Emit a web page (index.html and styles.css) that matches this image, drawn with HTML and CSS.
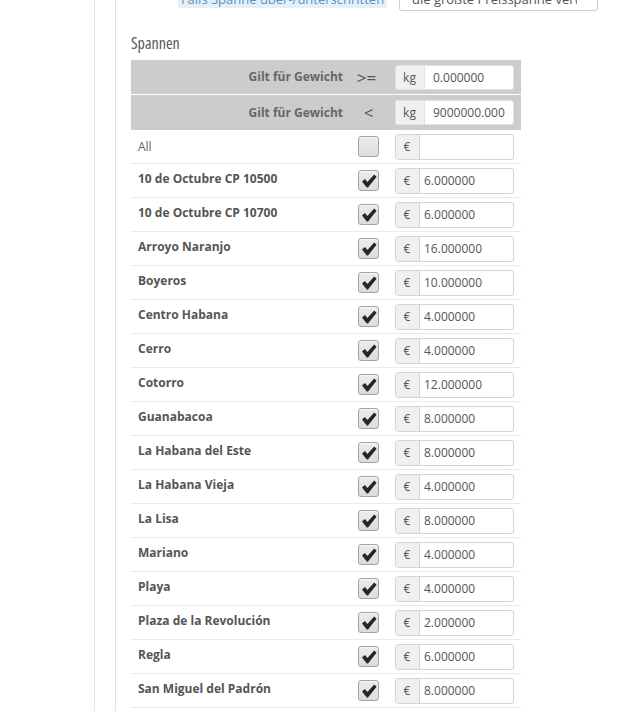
FILE: index.html
```html
<!DOCTYPE html>
<html lang="de">
<head>
<meta charset="utf-8">
<title>Spannen</title>
<link rel="stylesheet" href="styles.css">
</head>
<body>
<div class="frame">
  <div class="rail"></div>
  <div class="gutter"></div>
  <div class="content">
    <div class="toprow">
      <span class="hint">Falls Spanne über-/unterschritten</span>
      <div class="select"><span class="select-text">die größte Preisspanne verwenden</span><span class="caret"></span></div>
    </div>
    <h4 class="title">Spannen</h4>
    <div class="ranges">
      <div class="hrow first">
        <div class="lbl">Gilt für Gewicht</div>
        <div class="op">&gt;=</div>
        <div class="inp"><div class="group"><span class="addon kg">kg</span><span class="field kgf">0.000000</span></div></div>
      </div>
      <div class="hrow second">
        <div class="lbl">Gilt für Gewicht</div>
        <div class="op lt">&lt;</div>
        <div class="inp"><div class="group"><span class="addon kg">kg</span><span class="field kgf">9000000.000</span></div></div>
      </div>
      <div class="row">
        <div class="lbl all">All</div>
        <div class="chk"><span class="box"></span></div>
        <div class="inp"><div class="group"><span class="addon">€</span><span class="field"></span></div></div>
      </div>
      <div class="row"><div class="lbl">10 de Octubre CP 10500</div><div class="chk"><span class="box"><svg class="tick" viewBox="0 0 16 16"><path d="M1 8.6 L3.9 6 L6.4 9 L13.2 1.4 L15.6 3.8 L7 14.6 L5.8 14.6 Z"/></svg></span></div><div class="inp"><div class="group"><span class="addon">€</span><span class="field">6.000000</span></div></div></div>
      <div class="row"><div class="lbl">10 de Octubre CP 10700</div><div class="chk"><span class="box"><svg class="tick" viewBox="0 0 16 16"><path d="M1 8.6 L3.9 6 L6.4 9 L13.2 1.4 L15.6 3.8 L7 14.6 L5.8 14.6 Z"/></svg></span></div><div class="inp"><div class="group"><span class="addon">€</span><span class="field">6.000000</span></div></div></div>
      <div class="row"><div class="lbl">Arroyo Naranjo</div><div class="chk"><span class="box"><svg class="tick" viewBox="0 0 16 16"><path d="M1 8.6 L3.9 6 L6.4 9 L13.2 1.4 L15.6 3.8 L7 14.6 L5.8 14.6 Z"/></svg></span></div><div class="inp"><div class="group"><span class="addon">€</span><span class="field">16.000000</span></div></div></div>
      <div class="row"><div class="lbl">Boyeros</div><div class="chk"><span class="box"><svg class="tick" viewBox="0 0 16 16"><path d="M1 8.6 L3.9 6 L6.4 9 L13.2 1.4 L15.6 3.8 L7 14.6 L5.8 14.6 Z"/></svg></span></div><div class="inp"><div class="group"><span class="addon">€</span><span class="field">10.000000</span></div></div></div>
      <div class="row"><div class="lbl">Centro Habana</div><div class="chk"><span class="box"><svg class="tick" viewBox="0 0 16 16"><path d="M1 8.6 L3.9 6 L6.4 9 L13.2 1.4 L15.6 3.8 L7 14.6 L5.8 14.6 Z"/></svg></span></div><div class="inp"><div class="group"><span class="addon">€</span><span class="field">4.000000</span></div></div></div>
      <div class="row"><div class="lbl">Cerro</div><div class="chk"><span class="box"><svg class="tick" viewBox="0 0 16 16"><path d="M1 8.6 L3.9 6 L6.4 9 L13.2 1.4 L15.6 3.8 L7 14.6 L5.8 14.6 Z"/></svg></span></div><div class="inp"><div class="group"><span class="addon">€</span><span class="field">4.000000</span></div></div></div>
      <div class="row"><div class="lbl">Cotorro</div><div class="chk"><span class="box"><svg class="tick" viewBox="0 0 16 16"><path d="M1 8.6 L3.9 6 L6.4 9 L13.2 1.4 L15.6 3.8 L7 14.6 L5.8 14.6 Z"/></svg></span></div><div class="inp"><div class="group"><span class="addon">€</span><span class="field">12.000000</span></div></div></div>
      <div class="row"><div class="lbl">Guanabacoa</div><div class="chk"><span class="box"><svg class="tick" viewBox="0 0 16 16"><path d="M1 8.6 L3.9 6 L6.4 9 L13.2 1.4 L15.6 3.8 L7 14.6 L5.8 14.6 Z"/></svg></span></div><div class="inp"><div class="group"><span class="addon">€</span><span class="field">8.000000</span></div></div></div>
      <div class="row"><div class="lbl">La Habana del Este</div><div class="chk"><span class="box"><svg class="tick" viewBox="0 0 16 16"><path d="M1 8.6 L3.9 6 L6.4 9 L13.2 1.4 L15.6 3.8 L7 14.6 L5.8 14.6 Z"/></svg></span></div><div class="inp"><div class="group"><span class="addon">€</span><span class="field">8.000000</span></div></div></div>
      <div class="row"><div class="lbl">La Habana Vieja</div><div class="chk"><span class="box"><svg class="tick" viewBox="0 0 16 16"><path d="M1 8.6 L3.9 6 L6.4 9 L13.2 1.4 L15.6 3.8 L7 14.6 L5.8 14.6 Z"/></svg></span></div><div class="inp"><div class="group"><span class="addon">€</span><span class="field">4.000000</span></div></div></div>
      <div class="row"><div class="lbl">La Lisa</div><div class="chk"><span class="box"><svg class="tick" viewBox="0 0 16 16"><path d="M1 8.6 L3.9 6 L6.4 9 L13.2 1.4 L15.6 3.8 L7 14.6 L5.8 14.6 Z"/></svg></span></div><div class="inp"><div class="group"><span class="addon">€</span><span class="field">8.000000</span></div></div></div>
      <div class="row"><div class="lbl">Mariano</div><div class="chk"><span class="box"><svg class="tick" viewBox="0 0 16 16"><path d="M1 8.6 L3.9 6 L6.4 9 L13.2 1.4 L15.6 3.8 L7 14.6 L5.8 14.6 Z"/></svg></span></div><div class="inp"><div class="group"><span class="addon">€</span><span class="field">4.000000</span></div></div></div>
      <div class="row"><div class="lbl">Playa</div><div class="chk"><span class="box"><svg class="tick" viewBox="0 0 16 16"><path d="M1 8.6 L3.9 6 L6.4 9 L13.2 1.4 L15.6 3.8 L7 14.6 L5.8 14.6 Z"/></svg></span></div><div class="inp"><div class="group"><span class="addon">€</span><span class="field">4.000000</span></div></div></div>
      <div class="row"><div class="lbl">Plaza de la Revolución</div><div class="chk"><span class="box"><svg class="tick" viewBox="0 0 16 16"><path d="M1 8.6 L3.9 6 L6.4 9 L13.2 1.4 L15.6 3.8 L7 14.6 L5.8 14.6 Z"/></svg></span></div><div class="inp"><div class="group"><span class="addon">€</span><span class="field">2.000000</span></div></div></div>
      <div class="row"><div class="lbl">Regla</div><div class="chk"><span class="box"><svg class="tick" viewBox="0 0 16 16"><path d="M1 8.6 L3.9 6 L6.4 9 L13.2 1.4 L15.6 3.8 L7 14.6 L5.8 14.6 Z"/></svg></span></div><div class="inp"><div class="group"><span class="addon">€</span><span class="field">6.000000</span></div></div></div>
      <div class="row"><div class="lbl">San Miguel del Padrón</div><div class="chk"><span class="box"><svg class="tick" viewBox="0 0 16 16"><path d="M1 8.6 L3.9 6 L6.4 9 L13.2 1.4 L15.6 3.8 L7 14.6 L5.8 14.6 Z"/></svg></span></div><div class="inp"><div class="group"><span class="addon">€</span><span class="field">8.000000</span></div></div></div>
    </div>
  </div>
</div>
</body>
</html>
```
FILE: styles.css
```css
html, body {
  margin: 0;
  padding: 0;
  background: #fff;
}
body {
  font-family: "Open Sans", "Liberation Sans", sans-serif;
  font-size: 12px;
  color: #555;
  overflow: hidden;
}
.frame {
  display: flex;
  height: 711px;
  overflow: hidden;
}
.rail {
  width: 94px;
  flex: none;
  border-right: 1px solid #e4e4e4;
}
.gutter {
  width: 20px;
  flex: none;
  border-right: 1px solid #e4e4e4;
}
.content {
  flex: 1;
  padding-left: 15px;
}
.toprow {
  display: flex;
  align-items: flex-start;
  gap: 12px;
  margin-top: -16px;
  padding-left: 47px;
}
.hint {
  box-sizing: border-box;
  width: 209px;
  height: 24px;
  display: flex;
  align-items: flex-end;
  justify-content: center;
  padding-bottom: 1px;
  background: #e6f0f8;
  color: #5a92c4;
  font-size: 13px;
  line-height: 16px;
  border-radius: 3px;
  white-space: nowrap;
}
.select {
  box-sizing: border-box;
  width: 199px;
  height: 27px;
  border: 1px solid #cfcfcf;
  border-radius: 3px;
  display: flex;
  align-items: flex-end;
  padding: 0 8px 3px 12px;
  gap: 6px;
  font-size: 13px;
  line-height: 16px;
  color: #555;
  overflow: hidden;
}
.select-text {
  flex: 1;
  overflow: hidden;
  white-space: nowrap;
}
.caret {
  width: 0;
  height: 0;
  border-left: 3px solid transparent;
  border-right: 3px solid transparent;
  border-top: 3px solid #888;
  margin-bottom: 9px;
}
.title {
  margin: 23px 0 7px;
  font-family: "Open Sans", sans-serif;
  font-stretch: 75%;
  font-weight: normal;
  font-size: 16px;
  line-height: 19px;
  color: #555;
}
.ranges {
  width: 390px;
}
.hrow {
  display: flex;
  align-items: center;
  background: #cccccc;
  height: 34px;
}
.hrow.first {
  border-bottom: 1px solid #fff;
}
.hrow.second {
  height: 35px;
}
.row {
  display: flex;
  align-items: center;
  height: 33px;
  border-bottom: 1px solid #ebebeb;
}
.lbl {
  box-sizing: border-box;
  width: 219px;
  flex: none;
  padding-left: 7px;
  font-weight: 700;
  color: #555;
  white-space: nowrap;
  padding-bottom: 5px;
}
.lbl.all {
  font-weight: normal;
  color: #666;
  padding-bottom: 0;
}
.hrow .lbl {
  text-align: right;
  padding-right: 7px;
  padding-left: 0;
  padding-bottom: 1px;
  color: #666;
}
.op {
  width: 37px;
  flex: none;
  text-align: center;
  font-size: 17px;
  color: #555;
  padding-left: 0;
  padding-right: 4px;
  box-sizing: border-box;
}
.op.lt {
  padding-right: 0;
}
.chk {
  width: 37px;
  flex: none;
  display: flex;
  justify-content: flex-start;
  padding-left: 8px;
  box-sizing: border-box;
}
.box {
  box-sizing: border-box;
  width: 21px;
  height: 21px;
  border: 1px solid #a4a4a4;
  border-radius: 3px;
  background: linear-gradient(#ececec, #dcdcdc);
  box-shadow: inset 0 1px 0 #f6f6f6;
  display: flex;
  align-items: center;
  justify-content: center;
}
.tick {
  width: 16px;
  height: 16px;
  fill: #262626;
}
.inp {
  flex: none;
  padding-left: 8px;
}
.group {
  box-sizing: border-box;
  display: flex;
  width: 119px;
  height: 26px;
  border: 1px solid #d4d4d4;
  border-radius: 3px;
  overflow: hidden;
  background: #fff;
}
.hrow .group {
  border-color: #e2e2e2;
  height: 25px;
}
.addon {
  box-sizing: border-box;
  width: 24px;
  flex: none;
  background: #f0f0f0;
  border-right: 1px solid #d4d4d4;
  display: flex;
  align-items: center;
  justify-content: center;
  color: #555;
  padding-right: 1px;
}
.addon.kg {
  width: 29px;
  border-right-color: #e2e2e2;
}
.field {
  flex: 1;
  display: flex;
  align-items: center;
  padding-left: 4px;
  color: #555;
  white-space: nowrap;
  overflow: hidden;
}
.field.kgf {
  padding-left: 8px;
}
```
